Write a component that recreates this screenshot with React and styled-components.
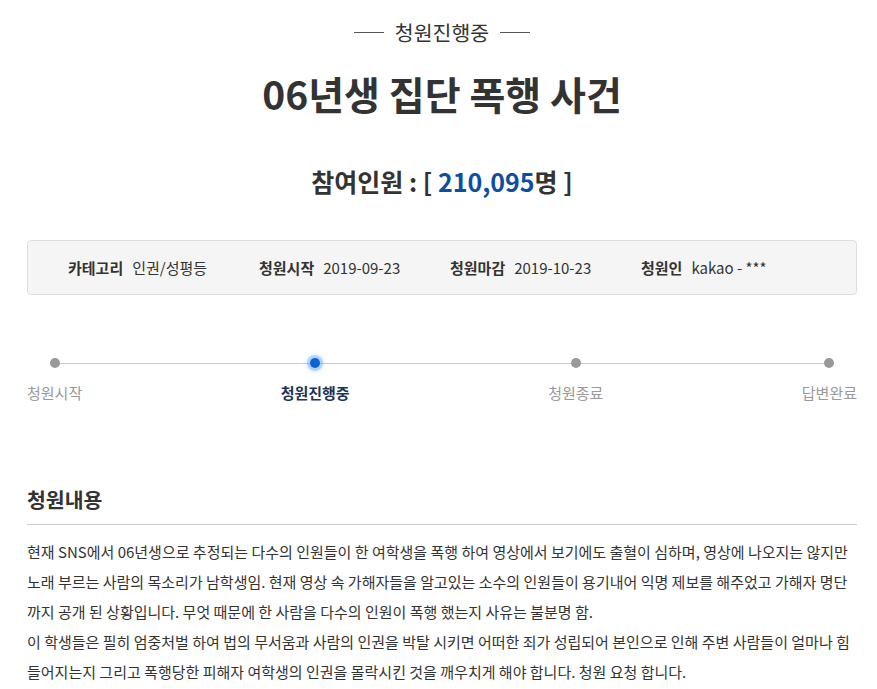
import React from 'react';
import styled, { createGlobalStyle } from 'styled-components';

const GlobalStyle = createGlobalStyle`
  body {
    margin: 0;
    background: #fff;
    font-family: "Noto Sans CJK KR", "Noto Sans", sans-serif;
    color: #333;
  }
`;

const Page = styled.div`
  width: 830px;
  margin: 0 0 0 27px;
  padding-top: 18px;
`;

const StatusTag = styled.div`
  display: flex;
  justify-content: center;
  align-items: center;
  gap: 11px;
  font-size: 20.5px;
  color: #333;
  line-height: 28px;

  &::before,
  &::after {
    content: '';
    width: 30px;
    height: 1px;
    background: #555;
  }
`;

const Title = styled.h1`
  margin: 19px 0 0;
  text-align: center;
  font-size: 39px;
  font-weight: 700;
  line-height: 56px;
  color: #333;
`;

const Count = styled.div`
  margin-top: 43px;
  text-align: center;
  font-size: 25px;
  font-weight: 700;
  line-height: 34px;
  color: #333;

  strong {
    color: #0b4ea2;
    font-weight: 700;
  }
`;

const InfoBox = styled.ul`
  list-style: none;
  box-sizing: border-box;
  margin: 42px 0 0;
  padding: 0 0 0 40px;
  height: 55px;
  display: flex;
  align-items: center;
  background: #f5f5f5;
  border: 1px solid #ddd;
  border-radius: 4px;
`;

const InfoItem = styled.li`
  width: 191px;
  font-size: 15px;
  color: #333;

  b {
    font-weight: 700;
    margin-right: 9px;
  }
`;

const Progress = styled.div`
  position: relative;
  margin-top: 58px;
  display: flex;
  justify-content: space-between;

  &::before {
    content: '';
    position: absolute;
    left: 26px;
    right: 28px;
    top: 10px;
    height: 1px;
    background: #c8c8c8;
  }
`;

const Step = styled.div`
  position: relative;
  display: flex;
  flex-direction: column;
  align-items: center;
  gap: 15px;
  font-size: 15px;
  line-height: 20px;
  color: ${p => (p.active ? '#1d3557' : '#999')};
  font-weight: ${p => (p.active ? 700 : 400)};
`;

const Dot = styled.span`
  width: 10px;
  height: 10px;
  margin-top: 5px;
  border-radius: 50%;
  background: ${p => (p.active ? '#0a64d2' : '#999')};
  box-shadow: ${p => (p.active ? '0 0 0 3px rgba(80, 160, 255, 0.35), 0 0 4px 4px rgba(120, 180, 255, 0.25)' : 'none')};
`;

const Section = styled.section`
  margin-top: 81px;
`;

const SectionTitle = styled.h2`
  margin: 0;
  padding-bottom: 10px;
  border-bottom: 1px solid #ccc;
  font-size: 20.5px;
  font-weight: 700;
  line-height: 30px;
  color: #333;
`;

const Body = styled.div`
  margin-top: 12px;
  font-size: 15px;
  line-height: 30px;
  color: #333;

  p {
    margin: 0;
  }
`;

const info = [
  ['카테고리', '인권/성평등'],
  ['청원시작', '2019-09-23'],
  ['청원마감', '2019-10-23'],
  ['청원인', 'kakao - ***'],
];

const steps = ['청원시작', '청원진행중', '청원종료', '답변완료'];

export default function App() {
  return (
    <>
      <GlobalStyle />
      <Page>
        <StatusTag>청원진행중</StatusTag>
        <Title>06년생 집단 폭행 사건</Title>
        <Count>
          참여인원 : [ <strong>210,095</strong>명 ]
        </Count>

        <InfoBox>
          {info.map(([k, v]) => (
            <InfoItem key={k}>
              <b>{k}</b>
              {v}
            </InfoItem>
          ))}
        </InfoBox>

        <Progress>
          {steps.map((s, i) => (
            <Step key={s} active={i === 1}>
              <Dot active={i === 1} />
              {s}
            </Step>
          ))}
        </Progress>

        <Section>
          <SectionTitle>청원내용</SectionTitle>
          <Body>
            <p>
              현재 SNS에서 06년생으로 추정되는 다수의 인원들이 한 여학생을 폭행 하여 영상에서 보기에도 출혈이 심하며, 영상에 나오지는 않지만 노래 부르는 사람의 목소리가 남학생임. 현재 영상 속 가해자들을 알고있는 소수의 인원들이 용기내어 익명 제보를 해주었고 가해자 명단까지 공개 된 상황입니다. 무엇 때문에 한 사람을 다수의 인원이 폭행 했는지 사유는 불분명 함.
            </p>
            <p>
              이 학생들은 필히 엄중처벌 하여 법의 무서움과 사람의 인권을 박탈 시키면 어떠한 죄가 성립되어 본인으로 인해 주변 사람들이 얼마나 힘들어지는지 그리고 폭행당한 피해자 여학생의 인권을 몰락시킨 것을 깨우치게 해야 합니다. 청원 요청 합니다.
            </p>
          </Body>
        </Section>
      </Page>
    </>
  );
}
